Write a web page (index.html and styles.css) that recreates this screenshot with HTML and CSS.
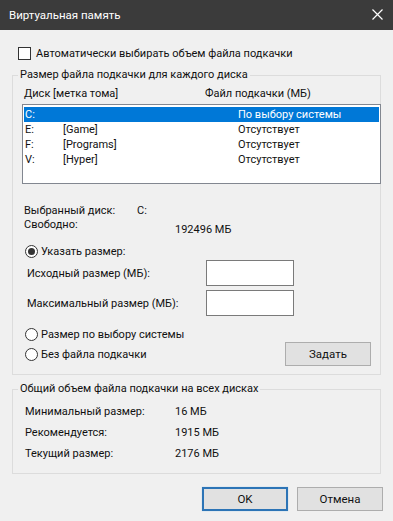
FILE: index.html
```html
<!DOCTYPE html>
<html lang="ru">
<head>
    <meta charset="UTF-8">
    <meta name="viewport" content="width=device-width, initial-scale=1.0">
    <title>Виртуальная память</title>
    <link rel="stylesheet" href="styles.css">
</head>
<body>
<div class="window">
    <div class="titlebar">
        <span>Виртуальная память</span>
        <svg class="close" width="11" height="11" viewBox="0 0 11 11">
            <path d="M0.5 0.5 L10.5 10.5 M10.5 0.5 L0.5 10.5" stroke="#ffffff" stroke-width="1.2" fill="none"/>
        </svg>
    </div>

    <div class="main">
        <div class="auto-row">
            <span class="checkbox"></span>
            <span>Автоматически выбирать объем файла подкачки</span>
        </div>

        <fieldset class="group group-disks">
            <legend>Размер файла подкачки для каждого диска</legend>
            <div class="list-head">
                <span class="col-disk">Диск [метка тома]</span>
                <span>Файл подкачки (МБ)</span>
            </div>
            <div class="listbox">
                <div class="row selected"><span class="c-drive">C:</span><span class="c-label"></span><span class="c-size">По выбору системы</span></div>
                <div class="row"><span class="c-drive">E:</span><span class="c-label">[Game]</span><span class="c-size">Отсутствует</span></div>
                <div class="row"><span class="c-drive">F:</span><span class="c-label">[Programs]</span><span class="c-size">Отсутствует</span></div>
                <div class="row"><span class="c-drive">V:</span><span class="c-label">[Hyper]</span><span class="c-size">Отсутствует</span></div>
            </div>

            <div class="disk-info">
                <span>Выбранный диск:</span><span class="drive-val">C:</span>
                <span>Свободно:</span><span class="free-val">192496 МБ</span>
            </div>

            <div class="radio-row first">
                <span class="radio checked"></span>
                <span>Указать размер:</span>
            </div>
            <div class="size-row">
                <span>Исходный размер (МБ):</span>
                <span class="input"></span>
            </div>
            <div class="size-row">
                <span>Максимальный размер (МБ):</span>
                <span class="input"></span>
            </div>
            <div class="radio-row sys">
                <span class="radio"></span>
                <span>Размер по выбору системы</span>
            </div>
            <div class="set-row">
                <div class="radio-row">
                    <span class="radio"></span>
                    <span>Без файла подкачки</span>
                </div>
                <button class="btn btn-set">Задать</button>
            </div>
        </fieldset>

        <fieldset class="group group-total">
            <legend>Общий объем файла подкачки на всех дисках</legend>
            <div class="totals">
                <span>Минимальный размер:</span><span>16 МБ</span>
                <span>Рекомендуется:</span><span>1915 МБ</span>
                <span>Текущий размер:</span><span>2176 МБ</span>
            </div>
        </fieldset>

        <div class="footer">
            <button class="btn btn-ok">OK</button>
            <button class="btn">Отмена</button>
        </div>
    </div>
</div>
</body>
</html>
```

FILE: styles.css
```css
/* Базовые стили окна */
* {
    margin: 0;
    padding: 0;
    box-sizing: border-box;
}

body {
    width: 393px;
    height: 521px;
    overflow: hidden;
    background-color: #f0f0f0;
    font-family: Roboto, "Noto Sans", Arial, sans-serif;
    font-size: 11px;
    color: #111;
    white-space: nowrap;
}

/* Заголовок окна */
.titlebar {
    height: 30px;
    background-color: #3b3b3b;
    color: #ffffff;
    font-size: 11.5px;
    display: flex;
    align-items: center;
    justify-content: space-between;
    padding: 0 10px 0 9px;
}

.close {
    margin-top: -2px;
}

.main {
    padding: 0 12px;
}

/* Флажок */
.auto-row {
    display: flex;
    align-items: center;
    height: 14px;
    margin-top: 16px;
    padding-left: 6px;
    gap: 5px;
}

.checkbox {
    width: 13px;
    height: 13px;
    border: 1px solid #333;
    background-color: #fff;
}

/* Группы */
.group {
    border: 1px solid #dcdcdc;
    padding: 0 0 0 9px;
    min-width: 0;
}

.group legend {
    line-height: 16px;
    padding: 0 2px;
    margin-left: -4px;
}

.group-disks {
    margin-top: 7px;
    padding-bottom: 8px;
}

.list-head {
    display: flex;
    line-height: 14px;
    margin-top: 4px;
    padding-left: 2px;
}

.col-disk {
    width: 181px;
    flex-shrink: 0;
}

.listbox {
    margin-top: 3px;
    margin-right: -1px;
    height: 80px;
    border: 1px solid #828790;
    background-color: #fff;
    padding: 2px 1px;
}

.row {
    display: flex;
    height: 15px;
    line-height: 15px;
    padding-left: 1px;
}

.row.selected {
    background-color: #0078d7;
    color: #fff;
}

.c-drive {
    width: 38px;
    flex-shrink: 0;
}

.c-label {
    width: 175px;
    flex-shrink: 0;
}

/* Информация о диске */
.disk-info {
    display: grid;
    grid-template-columns: 113px 1fr;
    line-height: 14px;
    margin-top: 20px;
    padding-left: 2px;
}

.free-val {
    margin-left: 38px;
    margin-top: 5px;
}

.radio-row {
    display: flex;
    align-items: center;
    gap: 3px;
    height: 14px;
    padding-left: 3px;
}

.radio-row.first {
    margin-top: 7px;
}

.radio-row.sys {
    margin-top: 11px;
}

.radio {
    width: 13px;
    height: 13px;
    border: 1px solid #333;
    border-radius: 50%;
    background-color: #fff;
    display: flex;
    align-items: center;
    justify-content: center;
}

.radio.checked::after {
    content: "";
    width: 7px;
    height: 7px;
    border-radius: 50%;
    background-color: #333;
}

.size-row {
    display: flex;
    align-items: center;
    height: 26px;
    padding-left: 5px;
    margin-top: 2px;
}

.size-row + .size-row {
    margin-top: 4px;
}

.input {
    margin-left: auto;
    margin-right: 86px;
    width: 88px;
    height: 26px;
    border: 1px solid #7a7a7a;
    background-color: #fff;
}

.set-row {
    display: flex;
    align-items: center;
    justify-content: space-between;
    margin-top: 1px;
    padding-right: 9px;
}

/* Кнопки */
.btn {
    font-family: inherit;
    font-size: 11.5px;
    color: #111;
    background-color: #e1e1e1;
    border: 1px solid #adadad;
    height: 24px;
    width: 86px;
}

.btn-ok {
    border: 2px solid #2c74b6;
    box-shadow: 0 0 1px #9cc8ee;
}

.group-total {
    margin-top: 6px;
    padding-bottom: 9px;
}

.totals {
    display: grid;
    grid-template-columns: 150px 1fr;
    line-height: 21px;
    margin-top: 4px;
    padding-left: 3px;
}

.footer {
    display: flex;
    justify-content: flex-end;
    gap: 9px;
    margin-top: 13px;
    margin-right: -2px;
}
```
